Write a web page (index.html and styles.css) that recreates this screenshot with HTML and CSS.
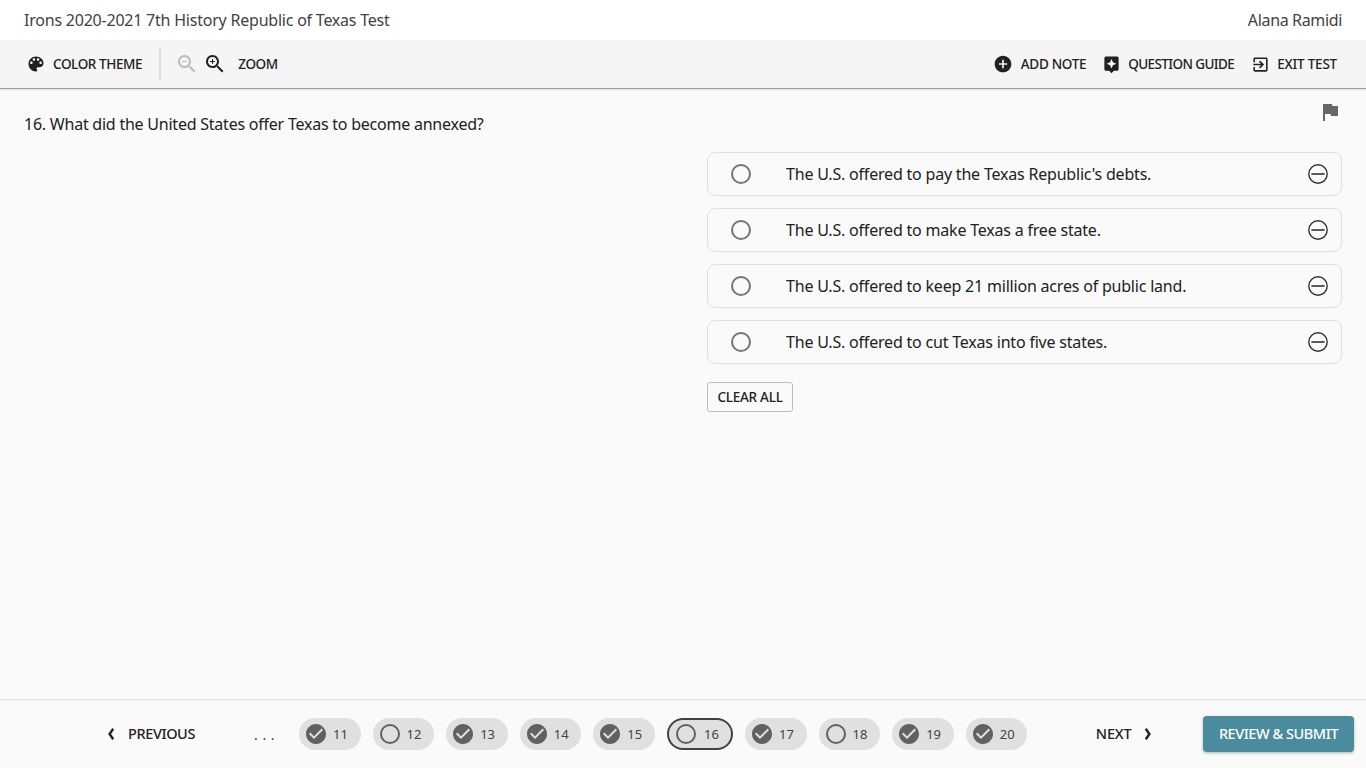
FILE: index.html
```html
<!DOCTYPE html>
<html lang="en">
<head>
<meta charset="utf-8">
<title>Republic of Texas Test</title>
<link rel="stylesheet" href="styles.css">
</head>
<body>
<svg class="defs" width="0" height="0" aria-hidden="true">
  <symbol id="i-check" viewBox="0 0 24 24"><path d="M12 2C6.48 2 2 6.48 2 12s4.48 10 10 10 10-4.48 10-10S17.52 2 12 2zm-2 15l-5-5 1.41-1.41L10 14.17l7.59-7.59L19 8l-9 9z"/></symbol>
  <symbol id="i-minus" viewBox="0 0 20 20"><circle cx="10" cy="10" r="9.2" fill="none" stroke="currentColor" stroke-width="1.4"/><path d="M3.4 10h13.2" fill="none" stroke="currentColor" stroke-width="1.6"/></symbol>
</svg>
<header class="titlebar">
  <span class="title">Irons 2020-2021 7th History Republic of Texas Test</span>
  <span class="user">Alana Ramidi</span>
</header>
<nav class="toolbar">
  <div class="tool-group">
    <button class="tool tool-theme"><svg class="ico" viewBox="0 0 24 24"><path d="M12 3c-4.97 0-9 4.03-9 9s4.03 9 9 9c.83 0 1.5-.67 1.5-1.5 0-.39-.15-.74-.39-1.01-.23-.26-.38-.61-.38-.99 0-.83.67-1.5 1.5-1.5H16c2.76 0 5-2.24 5-5 0-4.42-4.03-8-9-8zm-5.5 9c-.83 0-1.5-.67-1.5-1.5S5.67 9 6.5 9 8 9.67 8 10.5 7.33 12 6.5 12zm3-4C8.67 8 8 7.33 8 6.5S8.67 5 9.5 5s1.5.67 1.5 1.5S10.33 8 9.5 8zm5 0c-.83 0-1.5-.67-1.5-1.5S13.67 5 14.5 5s1.5.67 1.5 1.5S15.33 8 14.5 8zm3 4c-.83 0-1.5-.67-1.5-1.5S16.67 9 17.5 9s1.5.67 1.5 1.5-.67 1.5-1.5 1.5z"/></svg><span class="tool-label">COLOR THEME</span></button>
    <span class="divider"></span>
    <svg class="zoom-ico zoom-off" viewBox="0 0 24 24"><path d="M15.5 14h-.79l-.28-.27C15.41 12.59 16 11.11 16 9.5 16 5.91 13.09 3 9.5 3S3 5.91 3 9.5 5.91 16 9.5 16c1.61 0 3.09-.59 4.23-1.57l.27.28v.79l5 4.99L20.49 19l-4.99-5zm-6 0C7.01 14 5 11.99 5 9.5S7.01 5 9.5 5 14 7.01 14 9.5 11.99 14 9.5 14zM7 9h5v1H7z"/></svg>
    <svg class="zoom-ico zoom-on" viewBox="0 0 24 24"><path d="M15.5 14h-.79l-.28-.27C15.41 12.59 16 11.11 16 9.5 16 5.91 13.09 3 9.5 3S3 5.91 3 9.5 5.91 16 9.5 16c1.61 0 3.09-.59 4.23-1.57l.27.28v.79l5 4.99L20.49 19l-4.99-5zm-6 0C7.01 14 5 11.99 5 9.5S7.01 5 9.5 5 14 7.01 14 9.5 11.99 14 9.5 14z"/><path d="M12 10h-2v2H9v-2H7V9h2V7h1v2h2v1z"/></svg>
    <span class="tool-label zoom-label">ZOOM</span>
  </div>
  <div class="tool-group">
    <button class="tool tool-note"><svg class="ico" viewBox="0 0 24 24"><path d="M12 2C6.48 2 2 6.48 2 12s4.48 10 10 10 10-4.48 10-10S17.52 2 12 2zm5 11h-4v4h-2v-4H7v-2h4V7h2v4h4v2z"/></svg><span class="tool-label">ADD NOTE</span></button>
    <button class="tool tool-guide"><svg class="ico" viewBox="0 0 24 24"><path d="M19 2H5c-1.1 0-2 .9-2 2v14c0 1.1.9 2 2 2h4l3 3 3-3h4c1.1 0 2-.9 2-2V4c0-1.1-.9-2-2-2zm-5.12 10.88L12 17l-1.88-4.12L6 11l4.12-1.88L12 5l1.88 4.12L18 11l-4.12 1.88z"/></svg><span class="tool-label">QUESTION GUIDE</span></button>
    <button class="tool tool-exit"><svg class="ico" viewBox="0 0 24 24"><path d="M3 9V5c0-1.1.9-2 2-2h14c1.1 0 2 .9 2 2v14c0 1.1-.9 2-2 2H5c-1.1 0-2-.9-2-2v-4h2v4h14V5H5v4H3zm7.09 6.59L12.67 13H3v-2h9.67l-2.58-2.59L11.5 7l5 5-5 5-1.41-1.41z"/></svg><span class="tool-label">EXIT TEST</span></button>
  </div>
</nav>
<main class="content">
  <div class="question-row">
    <p class="question">16. What did the United States offer Texas to become annexed?</p>
    <svg class="flag" viewBox="0 0 24 24"><path d="M14.4 6L14 4H5v17h2v-7h5.6l.4 2h7V6z"/></svg>
  </div>
  <section class="answers">
    <div class="option"><span class="radio"></span><span class="option-text">The U.S. offered to pay the Texas Republic's debts.</span><svg class="minus"><use href="#i-minus"/></svg></div>
    <div class="option"><span class="radio"></span><span class="option-text">The U.S. offered to make Texas a free state.</span><svg class="minus"><use href="#i-minus"/></svg></div>
    <div class="option"><span class="radio"></span><span class="option-text">The U.S. offered to keep 21 million acres of public land.</span><svg class="minus"><use href="#i-minus"/></svg></div>
    <div class="option"><span class="radio"></span><span class="option-text">The U.S. offered to cut Texas into five states.</span><svg class="minus"><use href="#i-minus"/></svg></div>
    <button class="clear">CLEAR ALL</button>
  </section>
</main>
<footer class="footer">
  <button class="nav-btn prev"><svg class="chev" viewBox="0 0 8 12"><path d="M6.2 .8L2.6 6l3.6 5.2"/></svg><span class="nav-label">PREVIOUS</span></button>
  <span class="dots">. . .</span>
  <div class="pills">
    <div class="pill"><svg class="done"><use href="#i-check"/></svg><span class="num">11</span></div>
    <div class="pill"><span class="open"></span><span class="num">12</span></div>
    <div class="pill"><svg class="done"><use href="#i-check"/></svg><span class="num">13</span></div>
    <div class="pill"><svg class="done"><use href="#i-check"/></svg><span class="num">14</span></div>
    <div class="pill"><svg class="done"><use href="#i-check"/></svg><span class="num">15</span></div>
    <div class="pill current"><span class="open"></span><span class="num">16</span></div>
    <div class="pill"><svg class="done"><use href="#i-check"/></svg><span class="num">17</span></div>
    <div class="pill"><span class="open"></span><span class="num">18</span></div>
    <div class="pill"><svg class="done"><use href="#i-check"/></svg><span class="num">19</span></div>
    <div class="pill"><svg class="done"><use href="#i-check"/></svg><span class="num">20</span></div>
  </div>
  <button class="nav-btn next"><span class="nav-label">NEXT</span><svg class="chev" viewBox="0 0 8 12"><path d="M1.8 .8L5.4 6l-3.6 5.2"/></svg></button>
  <button class="submit">REVIEW &amp; SUBMIT</button>
</footer>
</body>
</html>
```
FILE: styles.css
```css
* { box-sizing: border-box; }
html, body { height: 100%; }
body {
  margin: 0;
  height: 768px;
  display: flex;
  flex-direction: column;
  overflow: hidden;
  background: #fafafa;
  color: #212121;
  font-family: "Noto Sans", "Open Sans", sans-serif;
  font-size: 16px;
}
button { font: inherit; color: inherit; background: none; border: 0; padding: 0; }
.defs { position: absolute; }

.titlebar {
  height: 40px;
  flex: none;
  background: #fff;
  padding: 0 24px;
  display: flex;
  align-items: center;
  justify-content: space-between;
  color: #424242;
  letter-spacing: -.22px;
}
.user { letter-spacing: -.35px; }

.toolbar {
  height: 49px;
  flex: none;
  background: #f5f5f5;
  border-bottom: 1px solid #9e9e9e;
  box-shadow: 0 1px 2px rgba(0,0,0,.12);
  padding: 0 29px 0 26px;
  display: flex;
  align-items: center;
  justify-content: space-between;
}
.tool-group { display: flex; align-items: center; }
.tool { display: flex; align-items: center; }
.tool-label { font-size: 13.5px; font-weight: 550; line-height: 18px; padding-bottom: 1px; color: #212121; letter-spacing: -.4px; }
.zoom-label { letter-spacing: -.4px; }
.tool-guide .tool-label { letter-spacing: -.6px; }
.tool-note .tool-label { letter-spacing: -.3px; }
.tool-exit .tool-label { letter-spacing: -.22px; }
.ico { width: 19px; height: 19px; fill: #212121; margin-right: 7px; }
.tool-theme .ico { width: 20px; height: 20px; }
.tool-note .ico { width: 20px; height: 20px; margin-right: 8px; }
.divider { width: 2px; height: 32px; background: #e0e0e0; margin: 0 14px 0 17px; }
.zoom-ico { width: 24px; height: 24px; }
.zoom-off { fill: #bdbdbd; margin-right: 4px; }
.zoom-on { fill: #212121; margin-right: 11px; }
.tool-note { margin-right: 16px; }
.tool-guide { margin-right: 17px; }

.content { flex: 1; min-height: 0; padding: 0 24px; }
.question-row { display: flex; justify-content: space-between; height: 63px; }
.question { margin: 0; padding-top: 24px; line-height: 22px; color: #212121; letter-spacing: -.23px; }
.flag { width: 24px; height: 24px; fill: #666; margin-top: 11px; }
.answers { margin-left: 683px; display: flex; flex-direction: column; gap: 12px; align-items: flex-start; }
.option {
  width: 100%;
  height: 44px;
  display: flex;
  align-items: center;
  padding: 0 13px 0 23px;
  border: 1px solid #e0e0e0;
  border-radius: 8px;
  background: #fafafa;
}
.radio { width: 20px; height: 20px; border: 2px solid #757575; border-radius: 50%; flex: none; }
.option-text { flex: 1; margin-left: 35px; letter-spacing: -.2px; }
.minus { width: 20px; height: 20px; color: #333; flex: none; }
.clear {
  margin-top: 6px;
  width: 86px;
  height: 30px;
  border: 1px solid #bdbdbd;
  border-radius: 3px;
  background: #fafafa;
  font-size: 13.5px;
  font-weight: 550;
  letter-spacing: -.25px;
}

.footer {
  height: 69px;
  flex: none;
  border-top: 1px solid #e0e0e0;
  display: flex;
  align-items: center;
  padding: 0 12px 0 107px;
}
.nav-btn { display: flex; align-items: center; }
.nav-label { font-size: 14.5px; font-weight: 550; letter-spacing: -.4px; line-height: 20px; padding-bottom: 2px; }
.next .nav-label { letter-spacing: -.2px; }
.chev { width: 8px; height: 12px; fill: none; stroke: #212121; stroke-width: 2.4; }
.prev .chev { margin-right: 13px; }
.next .chev { margin-left: 13px; }
.dots { margin-left: 59px; width: 45px; color: #424242; font-size: 14px; word-spacing: 1px; }
.pills { display: flex; gap: 12px; align-items: center; }
.pill {
  height: 32px;
  width: 61.6px;
  border-radius: 16px;
  background: #e0e0e0;
  display: flex;
  align-items: center;
  padding-left: 5px;
}
.pill.current { width: 66px; border: 2px solid #424242; }
.done { width: 24px; height: 24px; fill: #616161; flex: none; }
.open { width: 20px; height: 20px; margin: 0 2px; border: 2px solid #616161; border-radius: 50%; flex: none; }
.num { margin-left: 5px; font-size: 13px; color: #424242; }
.current .num { margin-left: 6px; }
.next { margin-left: 68.5px; }
.submit {
  margin-left: auto;
  width: 151px;
  height: 36px;
  padding-bottom: 2px;
  background: #4a8b9e;
  color: #fff;
  border-radius: 4px;
  box-shadow: 0 1px 3px rgba(0,0,0,.3);
  font-size: 14.5px;
  font-weight: 550;
  letter-spacing: -.45px;
}
```
